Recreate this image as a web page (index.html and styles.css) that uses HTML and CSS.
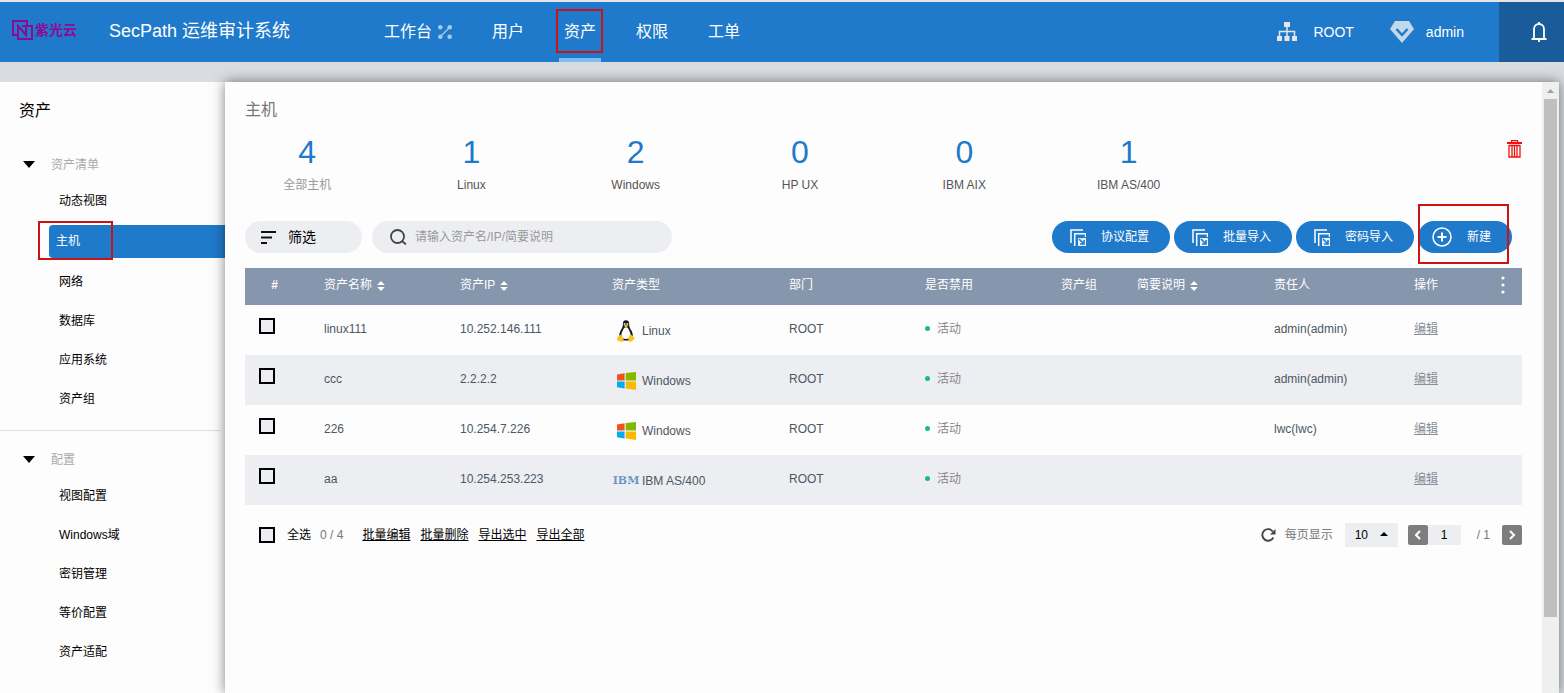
FILE: index.html
```html
<!DOCTYPE html>
<html lang="zh-CN">
<head>
<meta charset="utf-8">
<title>SecPath 运维审计系统</title>
<link rel="stylesheet" href="styles.css">
</head>
<body>
<svg class="defs" aria-hidden="true">
  <symbol id="i-import" viewBox="0 0 16 17"><path d="M1 14V1h12" fill="none" stroke="currentColor" stroke-width="1.500"/><path d="M4.700 17V4.700H15.500V8" fill="none" stroke="currentColor" stroke-width="1.500"/><path d="M8 9h8v8H8z" fill="#e6f0fa"/><path d="M9 10l4.500 4.500M14 11v4h-4" fill="none" stroke="#1f7acb" stroke-width="1.600"/></symbol>
  <symbol id="i-sort" viewBox="0 0 8 10"><path d="M4 0l3.800 4H.2zM4 10L.2 6h7.600z" fill="#fff"/></symbol>
  <symbol id="i-win" viewBox="0 0 19 18"><path d="M0 2.600L7.600 1.300V8.500H0z" fill="#f1511b"/><path d="M8.700 1.100L19 0v8.500H8.700z" fill="#80b900"/><path d="M0 9.500h7.600v6.900L0 15.300z" fill="#00adef"/><path d="M8.700 9.500H19V18L8.700 16.600z" fill="#fbb900"/></symbol>
</svg>

<header class="topbar">
  <a class="logo" href="#" aria-label="紫光云">
    <svg width="21" height="21" viewBox="0 0 21 21" fill="none" stroke="currentColor" stroke-width="2"><path d="M6 15H1V1h14v5"/><path d="M10 6h10v13H6V6l8 9V6"/></svg>
    <span>紫光云</span>
  </a>
  <h1 class="product">SecPath 运维审计系统</h1>
  <nav class="nav">
    <a href="#">工作台
      <svg width="14" height="14" viewBox="0 0 14 14" fill="#a6caea"><circle cx="2.300" cy="2.300" r="2.300"/><circle cx="11.700" cy="2.300" r="2.300"/><circle cx="2.300" cy="11.700" r="2.300"/><circle cx="11.700" cy="11.700" r="2.300"/><path d="M2 12L12 2" stroke="#a6caea" stroke-width="1.200"/></svg>
    </a>
    <a href="#">用户</a>
    <a href="#" class="current" aria-current="page">资产<span class="mark mark-nav"></span></a>
    <a href="#">权限</a>
    <a href="#">工单</a>
  </nav>
  <div class="account">
    <a href="#"><svg width="20" height="20" viewBox="0 0 20 20" fill="#e6e6e6"><path d="M7 0h6v5H7zM0 14h5v5H0zM7.500 14h5v5h-5zM15 14h5v5h-5z"/><path d="M10 5v9M2.500 14V9.500h15V14" fill="none" stroke="#e6e6e6" stroke-width="1.500"/></svg>ROOT</a>
    <a href="#" class="user"><svg width="24" height="22" viewBox="0 0 24 22"><path d="M5 0h14l5 8-12 14L0 8z" fill="#c4d8ec"/><path d="M6.500 8l5.500 6 5.500-6" fill="none" stroke="#1f7acb" stroke-width="2.500"/></svg>admin</a>
  </div>
  <button class="bell" type="button" aria-label="通知"><svg width="16" height="21" viewBox="0 0 16 21" fill="none" stroke="#fff" stroke-width="1.800"><path d="M3 17V7a5 5 0 0 1 10 0v10M.5 17h15M8 0v2M8 17v3"/></svg></button>
</header>

<div class="layout">
  <aside class="sidebar">
    <h2 class="side-title">资产</h2>
    <h3 class="group"><svg width="12" height="7" viewBox="0 0 12 7"><path d="M0 0h12L6 7z"/></svg>资产清单</h3>
    <ul class="menu">
      <li><a href="#">动态视图</a></li>
      <li><a href="#" class="active" aria-current="page">主机<span class="mark mark-side"></span></a></li>
      <li><a href="#">网络</a></li>
      <li><a href="#">数据库</a></li>
      <li><a href="#">应用系统</a></li>
      <li><a href="#">资产组</a></li>
    </ul>
    <hr class="rule">
    <h3 class="group"><svg width="12" height="7" viewBox="0 0 12 7"><path d="M0 0h12L6 7z"/></svg>配置</h3>
    <ul class="menu">
      <li><a href="#">视图配置</a></li>
      <li><a href="#">Windows域</a></li>
      <li><a href="#">密钥管理</a></li>
      <li><a href="#">等价配置</a></li>
      <li><a href="#">资产适配</a></li>
    </ul>
  </aside>

  <div class="panel">
    <main class="content">
      <h2 class="page-title">主机</h2>
      <div class="summary">
        <div class="stats">
          <a href="#" class="stat selected"><b>4</b><span>全部主机</span></a>
          <a href="#" class="stat"><b>1</b><span>Linux</span></a>
          <a href="#" class="stat"><b>2</b><span>Windows</span></a>
          <a href="#" class="stat"><b>0</b><span>HP UX</span></a>
          <a href="#" class="stat"><b>0</b><span>IBM AIX</span></a>
          <a href="#" class="stat"><b>1</b><span>IBM AS/400</span></a>
        </div>
        <button class="trash" type="button" aria-label="回收站"><svg width="15" height="18" viewBox="0 0 15 18" fill="none" stroke="#f01010"><path d="M0 3h15" stroke-width="2"/><path d="M4.500 2V.7h6V2" stroke-width="1.300"/><path d="M2 5v12h11V5M2 5.500h11M5 6v11M7.500 6v11M10 6v11" stroke-width="1.300"/></svg></button>
      </div>

      <div class="toolbar">
        <button class="filter" type="button"><svg width="15" height="13" viewBox="0 0 15 13" stroke="#111" stroke-width="2"><path d="M0 1h15M0 6.500h11M0 12h6"/></svg>筛选</button>
        <label class="search"><svg width="17" height="16" viewBox="0 0 17 16" fill="none" stroke="#444" stroke-width="1.800"><circle cx="7.500" cy="7.500" r="6.500"/><path d="M12 12l4 3.500"/></svg><input type="search" aria-label="搜索资产" placeholder="请输入资产名/IP/简要说明"></label>
        <div class="actions">
          <button class="pill" type="button"><svg width="16" height="17"><use href="#i-import"/></svg>协议配置</button>
          <button class="pill" type="button"><svg width="16" height="17"><use href="#i-import"/></svg>批量导入</button>
          <button class="pill" type="button"><svg width="16" height="17"><use href="#i-import"/></svg>密码导入</button>
          <button class="pill create" type="button"><svg width="20" height="20" viewBox="0 0 20 20" fill="none" stroke="#fff"><circle cx="10" cy="10" r="9" stroke-width="1.500"/><path d="M10 5.500v9M5.500 10h9" stroke-width="2"/></svg>新建<span class="mark mark-create"></span></button>
        </div>
      </div>

      <table class="hosts">
        <colgroup><col class="c-check"><col class="c-name"><col class="c-ip"><col class="c-type"><col class="c-dept"><col class="c-state"><col class="c-group"><col class="c-desc"><col class="c-owner"><col class="c-op"></colgroup>
        <thead>
          <tr>
            <th class="num">#</th>
            <th>资产名称<svg class="sort" width="8" height="10"><use href="#i-sort"/></svg></th>
            <th>资产IP<svg class="sort" width="8" height="10"><use href="#i-sort"/></svg></th>
            <th>资产类型</th>
            <th>部门</th>
            <th>是否禁用</th>
            <th>资产组</th>
            <th>简要说明<svg class="sort" width="8" height="10"><use href="#i-sort"/></svg></th>
            <th>责任人</th>
            <th><div class="op-head">操作<button type="button" aria-label="列设置"><svg width="4" height="18" viewBox="0 0 4 18" fill="#fff"><circle cx="2" cy="2" r="1.600"/><circle cx="2" cy="9" r="1.600"/><circle cx="2" cy="16" r="1.600"/></svg></button></div></th>
          </tr>
        </thead>
        <tbody>
          <tr>
            <td class="pick"><input class="check" type="checkbox" aria-label="linux111"></td>
            <td>linux111</td><td>10.252.146.111</td>
            <td><div class="os"><span class="os-icon"><svg width="18" height="22" viewBox="0 0 18 22"><path d="M9 .3C6.700.3 5.800 1.800 5.900 4c.1 2.800-.5 3.600-1.900 5.700C2.500 12.300 2 14.500 2.300 17L6 20.500h6.500l3.200-4c.3-2.500-.4-4.700-1.800-6.800-1.300-2.100-1.700-3-1.700-5.700C12.200 1.800 11.300.3 9 .3z" fill="#15171a"/><path d="M9 7.300c-1.800 0-2.400 1.500-3.300 3.500-1.100 2-1.700 4-1 6.200.4 2.500 8.200 2.500 8.600 0 .7-2.200.1-4.200-1-6.200-.9-2-1.500-3.500-3.300-3.500z" fill="#fff"/><circle cx="7.600" cy="3.900" r="1" fill="#ddd"/><circle cx="10.400" cy="3.900" r="1" fill="#ddd"/><path d="M6.600 5.800L9 4.800l2.500 1L9 7.600z" fill="#efc21b"/><path d="M3 14.500c1.200.4 2.900 3 3.600 5 .5 2.300-1.500 2.600-3 2L.5 20.500c-.9-.4 0-1.700-.2-3C.2 16.500 2 16.600 3 14.500zM14.300 14.800c.8.900 1.700 1.900 3.200 2.900.6.500.2 1-.7 1.700-1.300 1.200-2.400 2.600-4.200 2.400-1.700-.3-1.400-2.200-.9-4.200.2-1.800.9-3 2.600-2.800z" fill="#f8c51b"/></svg></span>Linux</div></td>
            <td>ROOT</td><td class="state">活动</td><td></td><td></td><td>admin(admin)</td><td><a class="edit" href="#">编辑</a></td>
          </tr>
          <tr>
            <td class="pick"><input class="check" type="checkbox" aria-label="ccc"></td>
            <td>ccc</td><td>2.2.2.2</td>
            <td><div class="os"><span class="os-icon"><svg width="19" height="18"><use href="#i-win"/></svg></span>Windows</div></td>
            <td>ROOT</td><td class="state">活动</td><td></td><td></td><td>admin(admin)</td><td><a class="edit" href="#">编辑</a></td>
          </tr>
          <tr>
            <td class="pick"><input class="check" type="checkbox" aria-label="226"></td>
            <td>226</td><td>10.254.7.226</td>
            <td><div class="os"><span class="os-icon"><svg width="19" height="18"><use href="#i-win"/></svg></span>Windows</div></td>
            <td>ROOT</td><td class="state">活动</td><td></td><td></td><td>lwc(lwc)</td><td><a class="edit" href="#">编辑</a></td>
          </tr>
          <tr>
            <td class="pick"><input class="check" type="checkbox" aria-label="aa"></td>
            <td>aa</td><td>10.254.253.223</td>
            <td><div class="os"><span class="os-icon ibm">IBM</span>IBM AS/400</div></td>
            <td>ROOT</td><td class="state">活动</td><td></td><td></td><td></td><td><a class="edit" href="#">编辑</a></td>
          </tr>
        </tbody>
      </table>

      <div class="table-foot">
        <label class="all"><input class="check" type="checkbox">全选</label>
        <span class="count">0 / 4</span>
        <div class="bulk"><a href="#">批量编辑</a><a href="#">批量删除</a><a href="#">导出选中</a><a href="#">导出全部</a></div>
        <div class="pager">
          <button class="reload" type="button" aria-label="刷新"><svg width="15" height="14" viewBox="0 0 15 14"><path d="M12.300 9.500A5.800 5.800 0 1 1 11.800 3.500" fill="none" stroke="#444" stroke-width="1.900"/><path d="M14.500 1v5.500H9z" fill="#444"/></svg></button>
          <label for="size">每页显示</label>
          <span class="size"><select id="size"><option>10</option><option>20</option><option>50</option></select><svg width="8" height="4" viewBox="0 0 8 4"><path d="M0 4l4-4 4 4z"/></svg></span>
          <button class="step" type="button" aria-label="上一页"><svg width="8" height="10" viewBox="0 0 8 10"><path d="M6 1L2 5l4 4" fill="none" stroke="#fff" stroke-width="2"/></svg></button>
          <input class="page" type="text" value="1" aria-label="页码">
          <span class="total">/ 1</span>
          <button class="step" type="button" aria-label="下一页"><svg width="8" height="10" viewBox="0 0 8 10"><path d="M2 1l4 4-4 4" fill="none" stroke="#fff" stroke-width="2"/></svg></button>
        </div>
      </div>
    </main>
    <div class="scrollbar" aria-hidden="true"><svg width="17" height="17" viewBox="0 0 17 17"><path d="M5 11l3.500-4 3.500 4z" fill="#a0a0a0"/></svg><div class="thumb"></div></div>
  </div>
</div>
</body>
</html>
```
FILE: styles.css
```css
:root {
  --blue: #1f7acb;
  --soft: #edeef2;
  --surface: #fdfdfd;
}

* { box-sizing: border-box; }

body {
  margin: 0;
  min-height: 100vh;
  display: flex;
  flex-direction: column;
  background: #d9dce1;
  font: 12px/16px "Liberation Sans", "Noto Sans CJK SC", sans-serif;
  color: #000;
}

a { color: inherit; text-decoration: none; }
h1, h2, h3 { margin: 0; font-weight: normal; }
svg { display: block; flex: none; }
button {
  padding: 0;
  border: 0;
  background: none;
  font: inherit;
  color: inherit;
  cursor: pointer;
}
input, select { font: inherit; color: inherit; border: 0; }
.defs { position: absolute; width: 0; height: 0; }

/* Red callout frames */
.mark {
  position: absolute;
  border: 2px solid #c81414;
  pointer-events: none;
}
.mark-nav { inset: 7px -2px 5px -3px; }
.mark-side { width: 75px; height: 39px; left: -11px; top: -4px; }
.mark-create { inset: -17px 3px -11px 0; }

/* Top bar */
.topbar {
  display: flex;
  align-items: center;
  height: 62px;
  border-top: 2px solid #e4e6e8;
  background: var(--blue);
  color: #fff;
}
.logo {
  display: flex;
  align-items: center;
  gap: 2px;
  width: 97px;
  padding: 0 0 4px;
  color: #8c0b94;
  font-size: 14px;
  font-weight: bold;
  margin-left: 12px;
}
.product { font-size: 18px; line-height: 24px; padding-bottom: 2px; white-space: nowrap; }
.nav {
  display: flex;
  align-self: stretch;
  gap: 30px;
  margin-left: 89px;
  font-size: 16px;
}
.nav a {
  position: relative;
  display: flex;
  align-items: center;
  gap: 6px;
  padding: 4px 5px 0;
  border-bottom: 4px solid transparent;
  white-space: nowrap;
}
.nav .current { border-color: #7dbcf5; }
.account {
  display: flex;
  gap: 36px;
  margin-left: auto;
  margin-right: 35px;
  font-size: 14px;
}
.account a { display: flex; align-items: center; gap: 16px; }
.account .user { gap: 12px; }
.bell {
  align-self: stretch;
  width: 65px;
  display: flex;
  align-items: center;
  justify-content: center;
  padding-left: 14px;
  background: #195c99;
}

/* Layout */
.layout { flex: 1; display: flex; padding: 20px 5px 0 0; }
.sidebar { width: 225px; flex: none; background: var(--surface); }
.side-title { padding: 17px 19px 24px; font-size: 16px; line-height: 24px; }
.group {
  display: flex;
  align-items: center;
  gap: 16px;
  height: 35px;
  padding-left: 23px;
  font-size: 12px;
  color: #aaa;
}
.menu { margin: 0; padding: 0; list-style: none; }
.menu a { display: block; padding-left: 59px; line-height: 39px; }
.menu .active {
  position: relative;
  margin: 4px 0 5px 49px;
  padding-left: 7px;
  line-height: 33px;
  background: var(--blue);
  border-radius: 4px 0 0 4px;
  color: #fff;
}
.rule { margin: 11px 5px 11px 0; border: 0; border-top: 1px solid #dcdce8; }

.panel {
  flex: 1;
  min-width: 0;
  display: flex;
  position: relative;
  background: var(--surface);
  box-shadow: 0 0 12px rgba(0, 0, 0, .5);
}
.content { flex: 1; min-width: 0; padding: 16px 20px; }
.scrollbar { width: 17px; flex: none; background: #efefef; }
.thumb { height: 518px; margin: 0 2px; background: #bfbfbf; }

.page-title { font-size: 16px; line-height: 24px; color: #777; }
.summary { display: flex; margin: 8px -20px 28px; padding-right: 20px; justify-content: space-between; }
.stats { width: 76%; display: grid; grid-template-columns: repeat(6, 1fr); }
.stat { text-align: center; color: #555; }
.stat b {
  display: block;
  font-size: 32px;
  line-height: 44px;
  font-weight: normal;
  color: var(--blue);
}
.stat span { display: block; margin-top: 3px; }
.stat.selected { color: #999; }
.trash { align-self: flex-start; padding-top: 10px; }

/* Toolbar */
.toolbar { display: flex; gap: 10px; margin-bottom: 15px; }
.filter, .search, .pill { display: flex; align-items: center; height: 32px; border-radius: 16px; }
.filter { width: 117px; padding-left: 16px; gap: 12px; background: var(--soft); font-size: 14px; }
.search { width: 300px; padding: 0 18px; gap: 8px; background: var(--soft); }
.search input { flex: 1; min-width: 0; padding: 0; background: none; outline: 0; }
.search input::placeholder { color: #999; }
.actions { display: flex; gap: 4px; margin: 0 10px 0 auto; }
.pill {
  position: relative;
  gap: 15px;
  padding: 0 21px 0 18px;
  background: var(--blue);
  color: #fff;
  white-space: nowrap;
}
.pill.create { padding-left: 14px; }

/* Table */
.hosts { width: 100%; table-layout: fixed; border-collapse: collapse; color: #4c5763; }
.c-check { width: 79px; }
.c-name, .c-dept, .c-state { width: 136px; }
.c-ip { width: 152px; }
.c-type { width: 177px; }
.c-group { width: 76px; }
.c-desc { width: 137px; }
.c-owner { width: 140px; }
.c-op { width: 108px; }
.hosts th {
  height: 37px;
  padding: 0 0 4px;
  background: #8696ac;
  color: #fff;
  font-weight: normal;
  text-align: left;
}
.hosts .num { padding-right: 20px; text-align: center; font-weight: bold; }
.sort { display: inline-block; margin-left: 5px; vertical-align: -2px; }
.op-head { display: flex; justify-content: space-between; align-items: center; padding-right: 17px; }
.hosts td { height: 50px; padding: 0 0 3px; }
.hosts tbody tr:nth-child(even) { background: var(--soft); }
.hosts .pick { padding: 0 0 8px 14px; }
.check {
  appearance: none;
  display: block;
  width: 16px;
  height: 16px;
  margin: 0;
  border: 2px solid #000;
  background: var(--soft);
}
.os { display: flex; align-items: center; gap: 2px; padding-top: 4px; }
.os-icon { width: 28px; display: flex; justify-content: center; }
.ibm {
  position: relative;
  font: bold 11px/12px "DejaVu Serif", serif;
  color: #5f90c0;
}
.ibm::after {
  content: "";
  position: absolute;
  inset: 0;
  background: repeating-linear-gradient(transparent 0 1px, rgba(237, 238, 242, .2) 1px 2px);
}
.state { color: #888; }
.state::before {
  content: "";
  display: inline-block;
  width: 5px;
  height: 5px;
  margin-right: 7px;
  border-radius: 50%;
  background: #1ab98c;
  vertical-align: 2px;
}
.edit { color: #888f98; text-decoration: underline; }

/* Table footer */
.table-foot { display: flex; align-items: center; margin-top: 18px; padding-left: 14px; }
.all { display: flex; align-items: center; gap: 12px; }
.count { margin: 0 19px 0 9px; color: #777; }
.bulk { display: flex; gap: 10px; }
.bulk a { text-decoration: underline; }
.pager { display: flex; align-items: center; margin-left: auto; color: #777; }
.reload { margin-right: 9px; }
.size { position: relative; margin: 0 10px 0 12px; color: #000; }
.size select {
  appearance: none;
  display: block;
  width: 53px;
  height: 24px;
  padding: 0 10px;
  background: var(--soft);
}
.size svg { position: absolute; right: 10px; top: 9px; pointer-events: none; }
.step {
  width: 20px;
  height: 20px;
  display: flex;
  align-items: center;
  justify-content: center;
  border-radius: 2px;
  background: #7d7d7d;
}
.page { width: 33px; height: 20px; padding: 0; text-align: center; background: var(--soft); color: #000; }
.total { margin: 0 12px 0 16px; }
```
